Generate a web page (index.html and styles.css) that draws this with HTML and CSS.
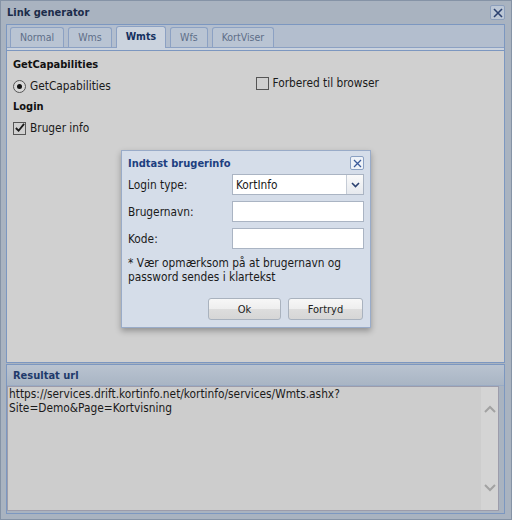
FILE: index.html
```html
<!DOCTYPE html>
<html lang="da">
<head>
    <meta charset="UTF-8">
    <meta name="viewport" content="width=device-width, initial-scale=1.0">
    <title>Link generator</title>
    <link rel="stylesheet" href="styles.css">
</head>
<body>
    <div class="window">
        <div class="titlebar">
            <span class="title">Link generator</span>
            <button class="close-btn" title="Luk">
                <svg width="10" height="10" viewBox="0 0 10 10"><path d="M1 1L9 9M9 1L1 9" stroke="#2b4170" stroke-width="1.6" fill="none"/></svg>
            </button>
        </div>

        <div class="tabpanel">
            <div class="tabstrip">
                <div class="tab">Normal</div>
                <div class="tab">Wms</div>
                <div class="tab active">Wmts</div>
                <div class="tab">Wfs</div>
                <div class="tab">KortViser</div>
            </div>
            <div class="tabfoot"></div>
            <div class="tabcontent">
                <div class="options">
                    <div class="col">
                        <h4>GetCapabilities</h4>
                        <label class="opt"><span class="radio on"></span>GetCapabilities</label>
                        <h4>Login</h4>
                        <label class="opt">
                            <span class="check">
                                <svg width="12" height="12" viewBox="0 0 12 12"><path d="M2 6L5 9L11 1.5" stroke="#1a1a1a" stroke-width="2" fill="none"/></svg>
                            </span>
                            Bruger info
                        </label>
                    </div>
                    <div class="col col-right">
                        <label class="opt"><span class="check"></span>Forbered til browser</label>
                    </div>
                </div>
            </div>
        </div>

        <div class="resultpanel">
            <div class="resulthead">Resultat url</div>
            <div class="urlbox">
                <textarea class="url" readonly>https://services.drift.kortinfo.net/kortinfo/services/Wmts.ashx?
Site=Demo&amp;Page=Kortvisning</textarea>
                <div class="scrollbar">
                    <svg width="12" height="8" viewBox="0 0 12 8"><path d="M1 7L6 2L11 7" stroke="#a2a2a2" stroke-width="2" fill="none"/></svg>
                    <svg width="12" height="8" viewBox="0 0 12 8"><path d="M1 1L6 6L11 1" stroke="#a2a2a2" stroke-width="2" fill="none"/></svg>
                </div>
            </div>
        </div>

        <!-- login dialog -->
        <div class="dialog">
            <div class="dialog-head">
                <span class="dialog-title">Indtast brugerinfo</span>
                <button class="dialog-close" title="Luk">
                    <svg width="9" height="9" viewBox="0 0 9 9"><path d="M1 1L8 8M8 1L1 8" stroke="#3a5a9a" stroke-width="1.3" fill="none"/></svg>
                </button>
            </div>
            <div class="form">
                <label>Login type:</label>
                <div class="select">
                    <span class="select-value">KortInfo</span>
                    <span class="select-btn">
                        <svg width="9" height="6" viewBox="0 0 9 6"><path d="M1 1L4.5 4.5L8 1" stroke="#2b4170" stroke-width="1.6" fill="none"/></svg>
                    </span>
                </div>
                <label for="user">Brugernavn:</label>
                <input type="text" id="user">
                <label for="pass">Kode:</label>
                <input type="password" id="pass">
            </div>
            <p class="note">* Vær opmærksom på at brugernavn og password sendes i klartekst</p>
            <div class="buttons">
                <button class="btn btn-ok">Ok</button>
                <button class="btn btn-cancel">Fortryd</button>
            </div>
        </div>
    </div>
</body>
</html>
```

FILE: styles.css
```css
body {
    margin: 0;
    font-family: "DejaVu Sans Condensed", "DejaVu Sans", sans-serif;
    font-size: 11.8px;
    color: #1a1a1a;
}

.window {
    position: relative;
    width: 512px;
    height: 520px;
    box-sizing: border-box;
    border: 1px solid #8593a6;
    background-color: #a9b3c0;
    padding: 0 6px 5px 5px;
    display: flex;
    flex-direction: column;
}

.titlebar {
    height: 23px;
    display: flex;
    align-items: center;
    justify-content: space-between;
    padding-left: 1px;
}

.title {
    font-size: 11px;
    font-weight: bold;
    color: #1c2c4a;
}

.close-btn {
    width: 15px;
    height: 15px;
    padding: 0;
    border: 1px solid #8c9fbc;
    border-radius: 2px;
    background-color: #bcc7d6;
    display: flex;
    align-items: center;
    justify-content: center;
}

/* tab panel */
.tabpanel {
    border: 1px solid #7c97c0;
    display: flex;
    flex-direction: column;
}

.tabstrip {
    height: 22px;
    display: flex;
    align-items: flex-end;
    gap: 4px;
    padding-left: 3px;
    background-color: #b3bece;
    border-bottom: 1px solid #8ca1c3;
}

.tab {
    height: 19px;
    line-height: 19px;
    padding: 0 9px;
    border: 1px solid #8ca1c3;
    border-bottom: none;
    border-radius: 3px 3px 0 0;
    background-color: #b9c4d3;
    color: #5e6e88;
    font-size: 10.5px;
}

.tab.active {
    height: 21px;
    margin-bottom: -1px;
    font-weight: bold;
    color: #15305e;
    background-color: #cbd3de;
}

.tabfoot {
    height: 2px;
    background-color: #cbd3de;
    border-bottom: 1px solid #7c97c0;
}

.tabcontent {
    height: 311px;
    background-color: #d0d0d0;
    padding: 6px 6px 0;
    box-sizing: border-box;
}

.options {
    display: flex;
}

.col {
    width: 249px;
    display: flex;
    flex-direction: column;
    gap: 4px;
}

.col-right {
    padding-top: 17px;
}

.col h4 {
    margin: 0;
    font-size: 11px;
    line-height: 16px;
    color: #111;
}

.opt {
    height: 18px;
    display: flex;
    align-items: center;
    gap: 4px;
}

.radio {
    width: 11px;
    height: 11px;
    border: 1px solid #555;
    border-radius: 50%;
    background-color: #d8d8d8;
    display: flex;
    align-items: center;
    justify-content: center;
}

.radio.on::after {
    content: "";
    width: 5px;
    height: 5px;
    border-radius: 50%;
    background-color: #111;
}

.check {
    width: 11px;
    height: 11px;
    border: 1px solid #555;
    display: flex;
    align-items: center;
    justify-content: center;
    overflow: visible;
}

/* result panel */
.resultpanel {
    margin-top: 1px;
    border: 1px solid #7c97c0;
    display: flex;
    flex-direction: column;
    flex: 1;
}

.resulthead {
    height: 20px;
    line-height: 21px;
    padding-left: 6px;
    font-size: 11px;
    font-weight: bold;
    color: #1f3a6b;
    background: linear-gradient(#b9c3d0, #a9b5c4);
    border-bottom: 1px solid #9aabc4;
}

.urlbox {
    flex: 1;
    margin: 0 5px 2px 0;
    border: 1px solid #9c9cab;
    background-color: #cdcdcd;
    display: flex;
}

.url {
    flex: 1;
    margin: 0;
    padding: 1px 1px 0;
    border: none;
    resize: none;
    overflow: hidden;
    background: transparent;
    font-family: inherit;
    font-size: 11.8px;
    line-height: 13.5px;
    color: #1a1a1a;
}

.scrollbar {
    width: 17px;
    background-color: #d4d4d4;
    display: flex;
    flex-direction: column;
    align-items: center;
    justify-content: space-between;
    padding: 18px 0 18px;
}

/* dialog */
.dialog {
    position: absolute;
    left: 120px;
    top: 149px;
    width: 250px;
    height: 178px;
    box-sizing: border-box;
    border: 1px solid #99abc8;
    background-color: #d5dde9;
    box-shadow: 0 3px 6px rgba(0, 0, 0, 0.3);
    padding: 4px 6px 0 6px;
}

.dialog-head {
    height: 16px;
    display: flex;
    align-items: center;
    justify-content: space-between;
}

.dialog-title {
    font-size: 11px;
    font-weight: bold;
    color: #1d3f80;
}

.dialog-close {
    width: 14px;
    height: 14px;
    padding: 0;
    border: 1px solid #8aa0c2;
    border-radius: 2px;
    background-color: #eef2f8;
    display: flex;
    align-items: center;
    justify-content: center;
}

.form {
    margin-top: 3px;
    display: grid;
    grid-template-columns: 104px 132px;
    grid-auto-rows: 21px;
    row-gap: 6px;
    align-items: center;
}

.form input,
.select {
    height: 21px;
    box-sizing: border-box;
    border: 1px solid #aab4c3;
    background-color: #fff;
    margin: 0;
}

.select {
    display: flex;
    align-items: center;
}

.select-value {
    flex: 1;
    padding-left: 3px;
}

.select-btn {
    width: 16px;
    height: 19px;
    border-left: 1px solid #c5ccd6;
    background: linear-gradient(#fafafa, #e6e9ee);
    display: flex;
    align-items: center;
    justify-content: center;
}

.note {
    margin: 7px 0 0;
    line-height: 14px;
}

.buttons {
    margin-top: 14px;
    display: flex;
    justify-content: flex-end;
    gap: 7px;
    padding-right: 1px;
}

.btn {
    height: 22px;
    padding: 0;
    font-family: inherit;
    font-size: 11px;
    color: #222;
    border: 1px solid #a9b2be;
    border-radius: 3px;
    background: linear-gradient(#f7f7f7 0%, #eeeeee 50%, #dddddd 51%, #d6d6d6 100%);
}

.btn-ok {
    width: 73px;
}

.btn-cancel {
    width: 75px;
}
```
